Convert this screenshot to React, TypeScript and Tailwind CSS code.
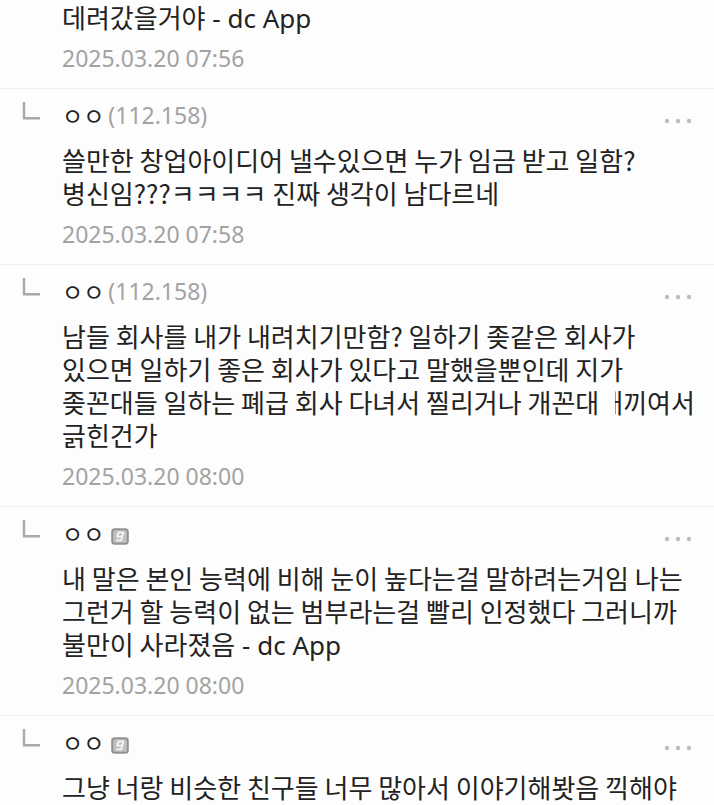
import type { ReactNode } from 'react';

interface Comment {
  id: number;
  ip?: string;
  body: ReactNode;
  date?: string;
}

const comments: Comment[] = [
  {
    id: 1,
    ip: '(112.158)',
    body: (
      <>
        쓸만한 창업아이디어 낼수있으면 누가 임금 받고 일함?
        <br />
        병신임???ㅋㅋㅋㅋ 진짜 생각이 남다르네
      </>
    ),
    date: '2025.03.20 07:58',
  },
  {
    id: 2,
    ip: '(112.158)',
    body: (
      <>
        남들 회사를 내가 내려치기만함? 일하기 좆같은 회사가
        <br />
        있으면 일하기 좋은 회사가 있다고 말했을뿐인데 지가
        <br />
        좆꼰대들 일하는 폐급 회사 다녀서 찔리거나 개꼰대
        <Smudged>새</Smudged>
        끼여서
        <br />
        긁힌건가
      </>
    ),
    date: '2025.03.20 08:00',
  },
  {
    id: 3,
    body: (
      <>
        내 말은 본인 능력에 비해 눈이 높다는걸 말하려는거임 나는
        <br />
        그런거 할 능력이 없는 범부라는걸 빨리 인정했다 그러니까
        <br />
        불만이 사라졌음
        <AppSuffix />
      </>
    ),
    date: '2025.03.20 08:00',
  },
  {
    id: 4,
    body: <>그냥 너랑 비슷한 친구들 너무 많아서 이야기해봣음 끽해야</>,
  },
];

// Signature the mobile app adds to a comment
function AppSuffix() {
  return <span className="font-['Noto_Sans',sans-serif] leading-none">{' - dc App'}</span>;
}

// A letter whose left part has been wiped out
function Smudged({ children }: { children: ReactNode }) {
  return (
    <span className="relative">
      {children}
      <span className="absolute inset-y-0 left-0 w-4 bg-[#fdfdfd]" />
    </span>
  );
}

function ReplyMark() {
  return (
    <svg width="18" height="18" viewBox="0 0 18 18" fill="none" aria-hidden="true">
      <path d="M2 0V16.3H18" stroke="#a9a9a9" strokeWidth="2.4" />
    </svg>
  );
}

function MemberBadge() {
  return (
    <svg
      className="mt-1.5 ml-[3px]"
      width="18"
      height="17"
      viewBox="0 0 18 17"
      role="img"
      aria-label="고정닉"
    >
      <rect x="1.2" y="1.2" width="15.6" height="14.6" rx="2.6" fill="#c0c0c0" stroke="#929292" strokeWidth="2" />
      <path
        d="M12.4 4.4H7.6L6.2 8.6H10.8L12.4 4.4L10.2 12.4H5.4"
        fill="none"
        stroke="#f4f4f4"
        strokeWidth="1.8"
        strokeLinejoin="round"
      />
    </svg>
  );
}

function MoreButton() {
  return (
    <button type="button" aria-label="더보기" className="flex h-8 items-center">
      <svg width="28" height="6" viewBox="0 0 28 6" fill="#bdbdbd" aria-hidden="true">
        <circle cx="3" cy="3" r="2.2" />
        <circle cx="14" cy="3" r="2.2" />
        <circle cx="25" cy="3" r="2.2" />
      </svg>
    </button>
  );
}

function Timestamp({ children }: { children: string }) {
  return (
    <time className="mt-[9px] block font-['Noto_Sans',sans-serif] text-[23px] leading-8 text-[#a3a3a3]">
      {children}
    </time>
  );
}

function CommentRow({ comment }: { comment: Comment }) {
  return (
    <li className="flex border-t border-[#eeeeee] pt-2.5 pb-3.5">
      <div className="w-[62px] shrink-0 pt-[3px] pl-[22px]">
        <ReplyMark />
      </div>
      <div className="min-w-0 flex-1">
        <div className="flex justify-between pr-[22px]">
          <div className="flex h-8 items-center gap-1 text-[23px] leading-8">
            <span>ㅇㅇ</span>
            {comment.ip ? (
              <span className="font-['Noto_Sans',sans-serif] text-[#a3a3a3]">{comment.ip}</span>
            ) : (
              <MemberBadge />
            )}
          </div>
          <div className="pt-1.5">
            <MoreButton />
          </div>
        </div>
        <p className="mt-1.5 text-[26px] leading-[33px] whitespace-nowrap">{comment.body}</p>
        {comment.date && <Timestamp>{comment.date}</Timestamp>}
      </div>
    </li>
  );
}

export default function App() {
  return (
    <main className="overflow-hidden bg-[#fdfdfd] font-['Noto_Sans_CJK_KR',sans-serif] text-[#222]">
      <article className="pb-3.5 pl-[62px]">
        <p className="text-[26px] leading-[33px]">
          데려갔을거야
          <AppSuffix />
        </p>
        <Timestamp>2025.03.20 07:56</Timestamp>
      </article>
      <ul>
        {comments.map((comment) => (
          <CommentRow key={comment.id} comment={comment} />
        ))}
      </ul>
    </main>
  );
}
